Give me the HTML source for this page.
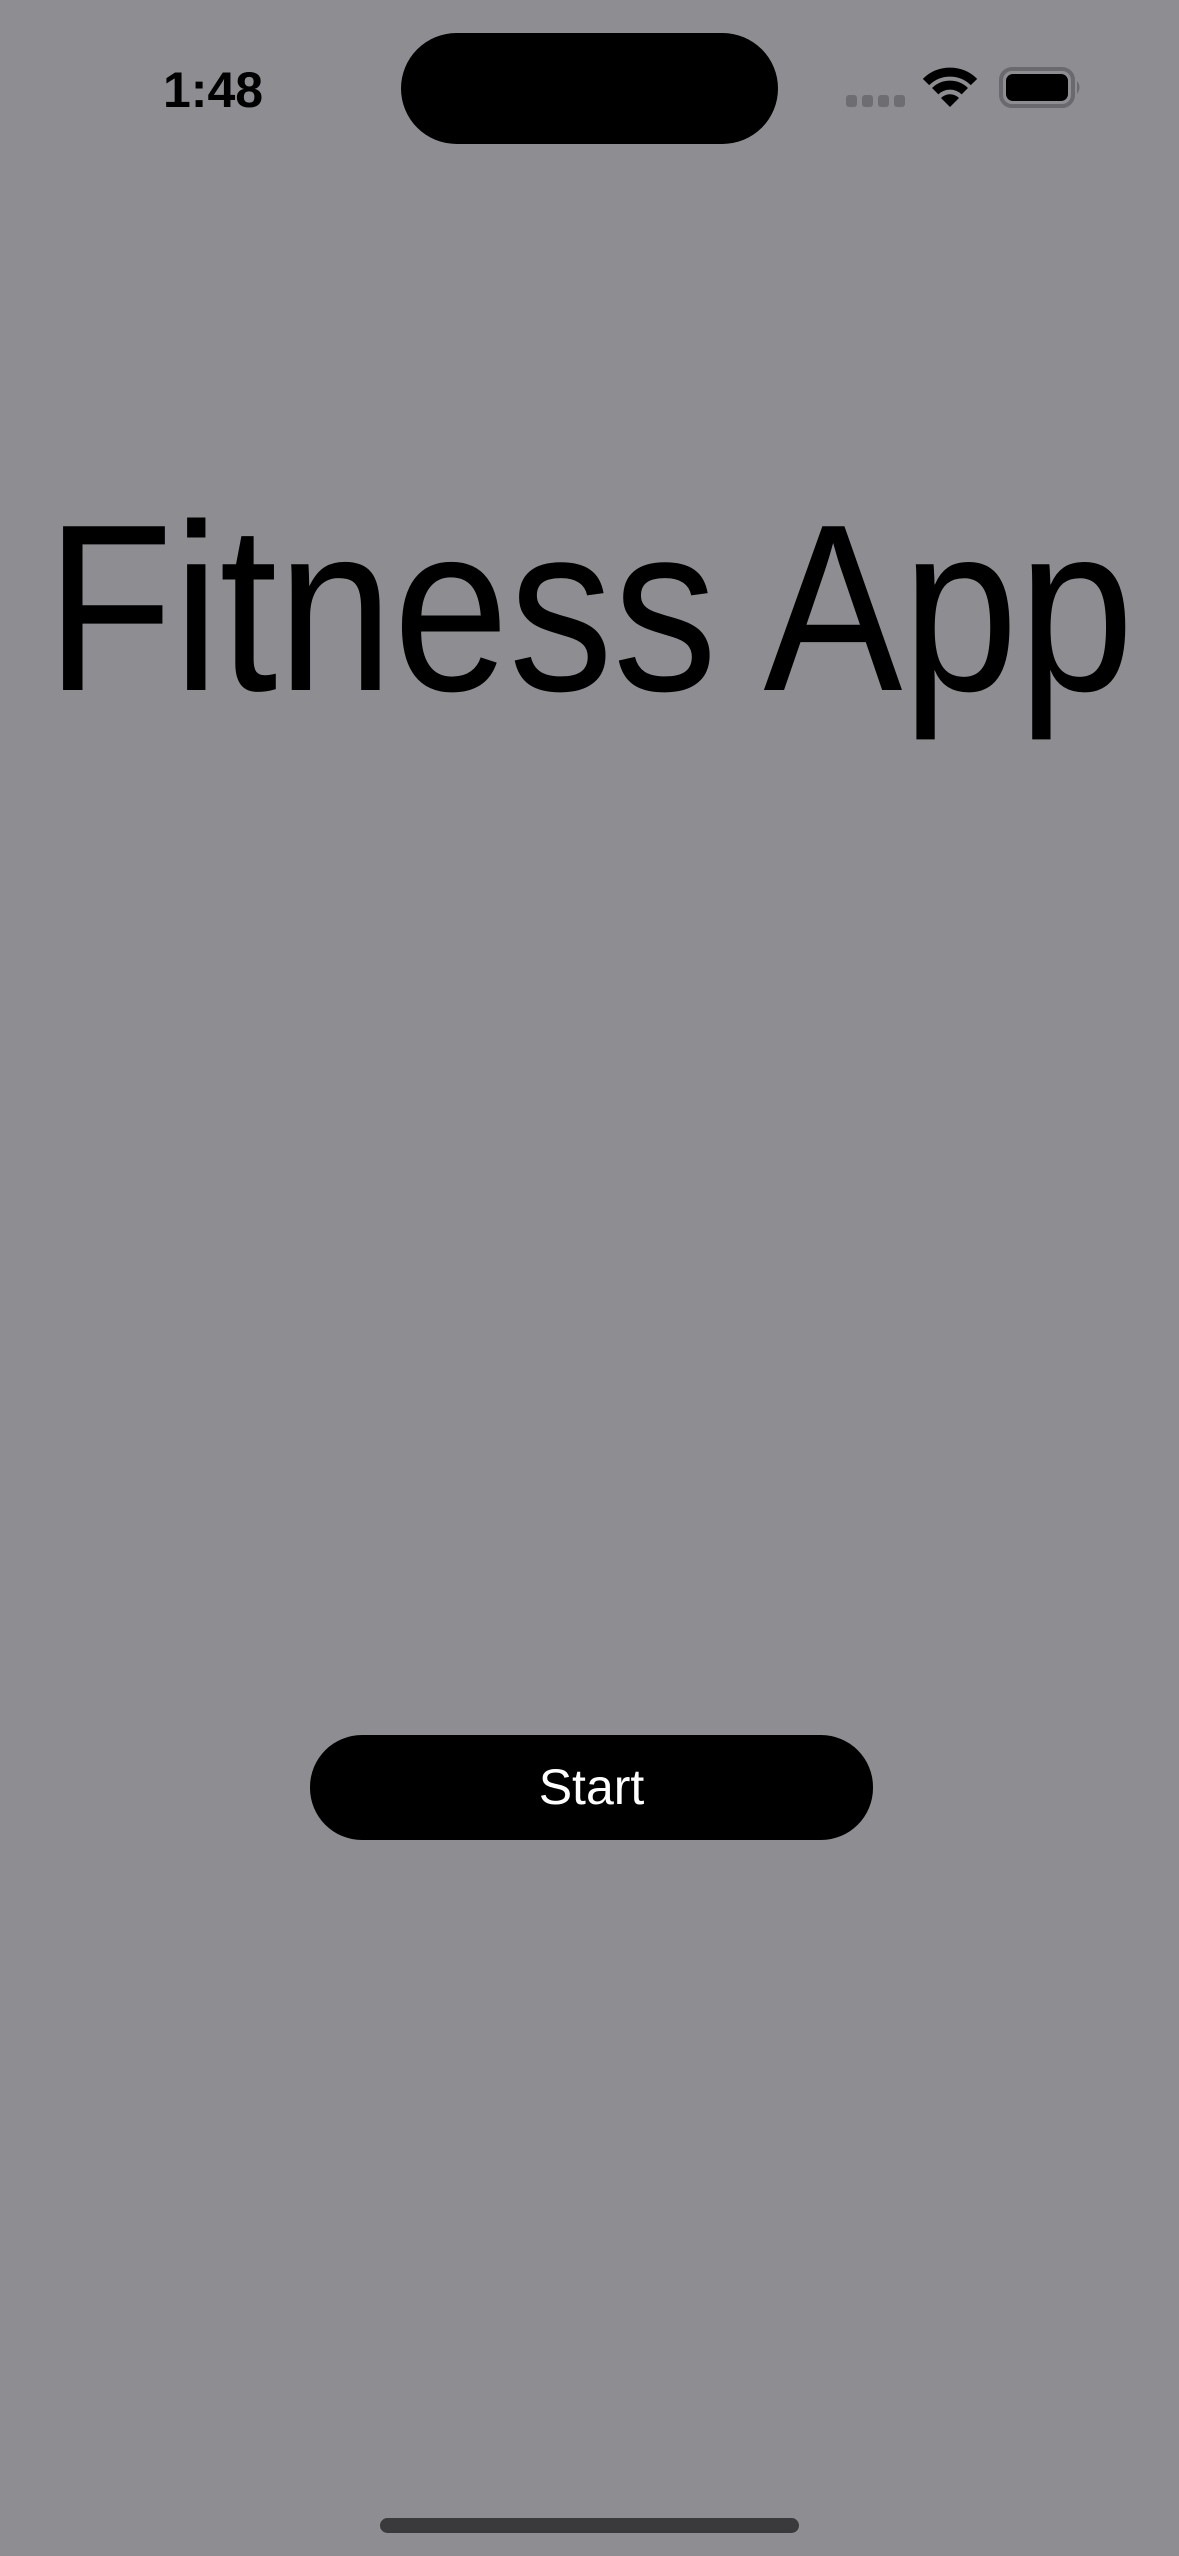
<!DOCTYPE html>
<html><head><meta charset="utf-8"><style>
html,body{margin:0;padding:0}
body{width:1179px;height:2556px;background:#8e8d92;position:relative;overflow:hidden;font-family:"Liberation Sans",sans-serif}
.time{position:absolute;left:163px;top:61px;font-size:50px;font-weight:bold;color:#000;letter-spacing:0px}
.island{position:absolute;left:401px;top:33px;width:377px;height:111px;border-radius:56px;background:#000}
.btn{position:absolute;left:310px;top:1735px;width:563px;height:105px;border-radius:52px;background:#000;color:#fff;font-size:50px;text-align:center;line-height:105px}
.home{position:absolute;left:380px;top:2518px;width:419px;height:15px;border-radius:8px;background:#3a3a3c}
</style></head><body>
<div class="time">1:48</div>
<div class="island"></div>
<svg style="position:absolute;left:0;top:0" width="1179" height="160">
  <g fill="#6e6d72">
    <rect x="846" y="95" width="11" height="12" rx="3"/>
    <rect x="862" y="95" width="11" height="12" rx="3"/>
    <rect x="878" y="95" width="11" height="12" rx="3"/>
    <rect x="894" y="95" width="11" height="12" rx="3"/>
  </g>
  <g fill="none" stroke="#000" stroke-width="9">
    <path d="M926 82 A34 34 0 0 1 974 82"/>
    <path d="M935.2 91.2 A21 21 0 0 1 964.8 91.2"/>
  </g>
  <path d="M950 107 L941 98 A12.7 12.7 0 0 1 959 98 Z" fill="#000"/>
  <rect x="1001" y="69" width="72" height="37" rx="11" fill="none" stroke="#6a696e" stroke-width="4"/>
  <rect x="1006" y="74" width="62" height="27" rx="7" fill="#000"/>
  <path d="M1077 81 Q1082 87 1077 94 Z" fill="#6a696e"/>
</svg>
<svg style="position:absolute;left:0;top:440" width="1179" height="360">
  <text x="46" y="250" font-family="Liberation Sans, sans-serif" font-size="238" fill="#000" textLength="1088" lengthAdjust="spacingAndGlyphs">Fitness App</text>
</svg>
<div class="btn">Start</div>
<div class="home"></div>
</body></html>
